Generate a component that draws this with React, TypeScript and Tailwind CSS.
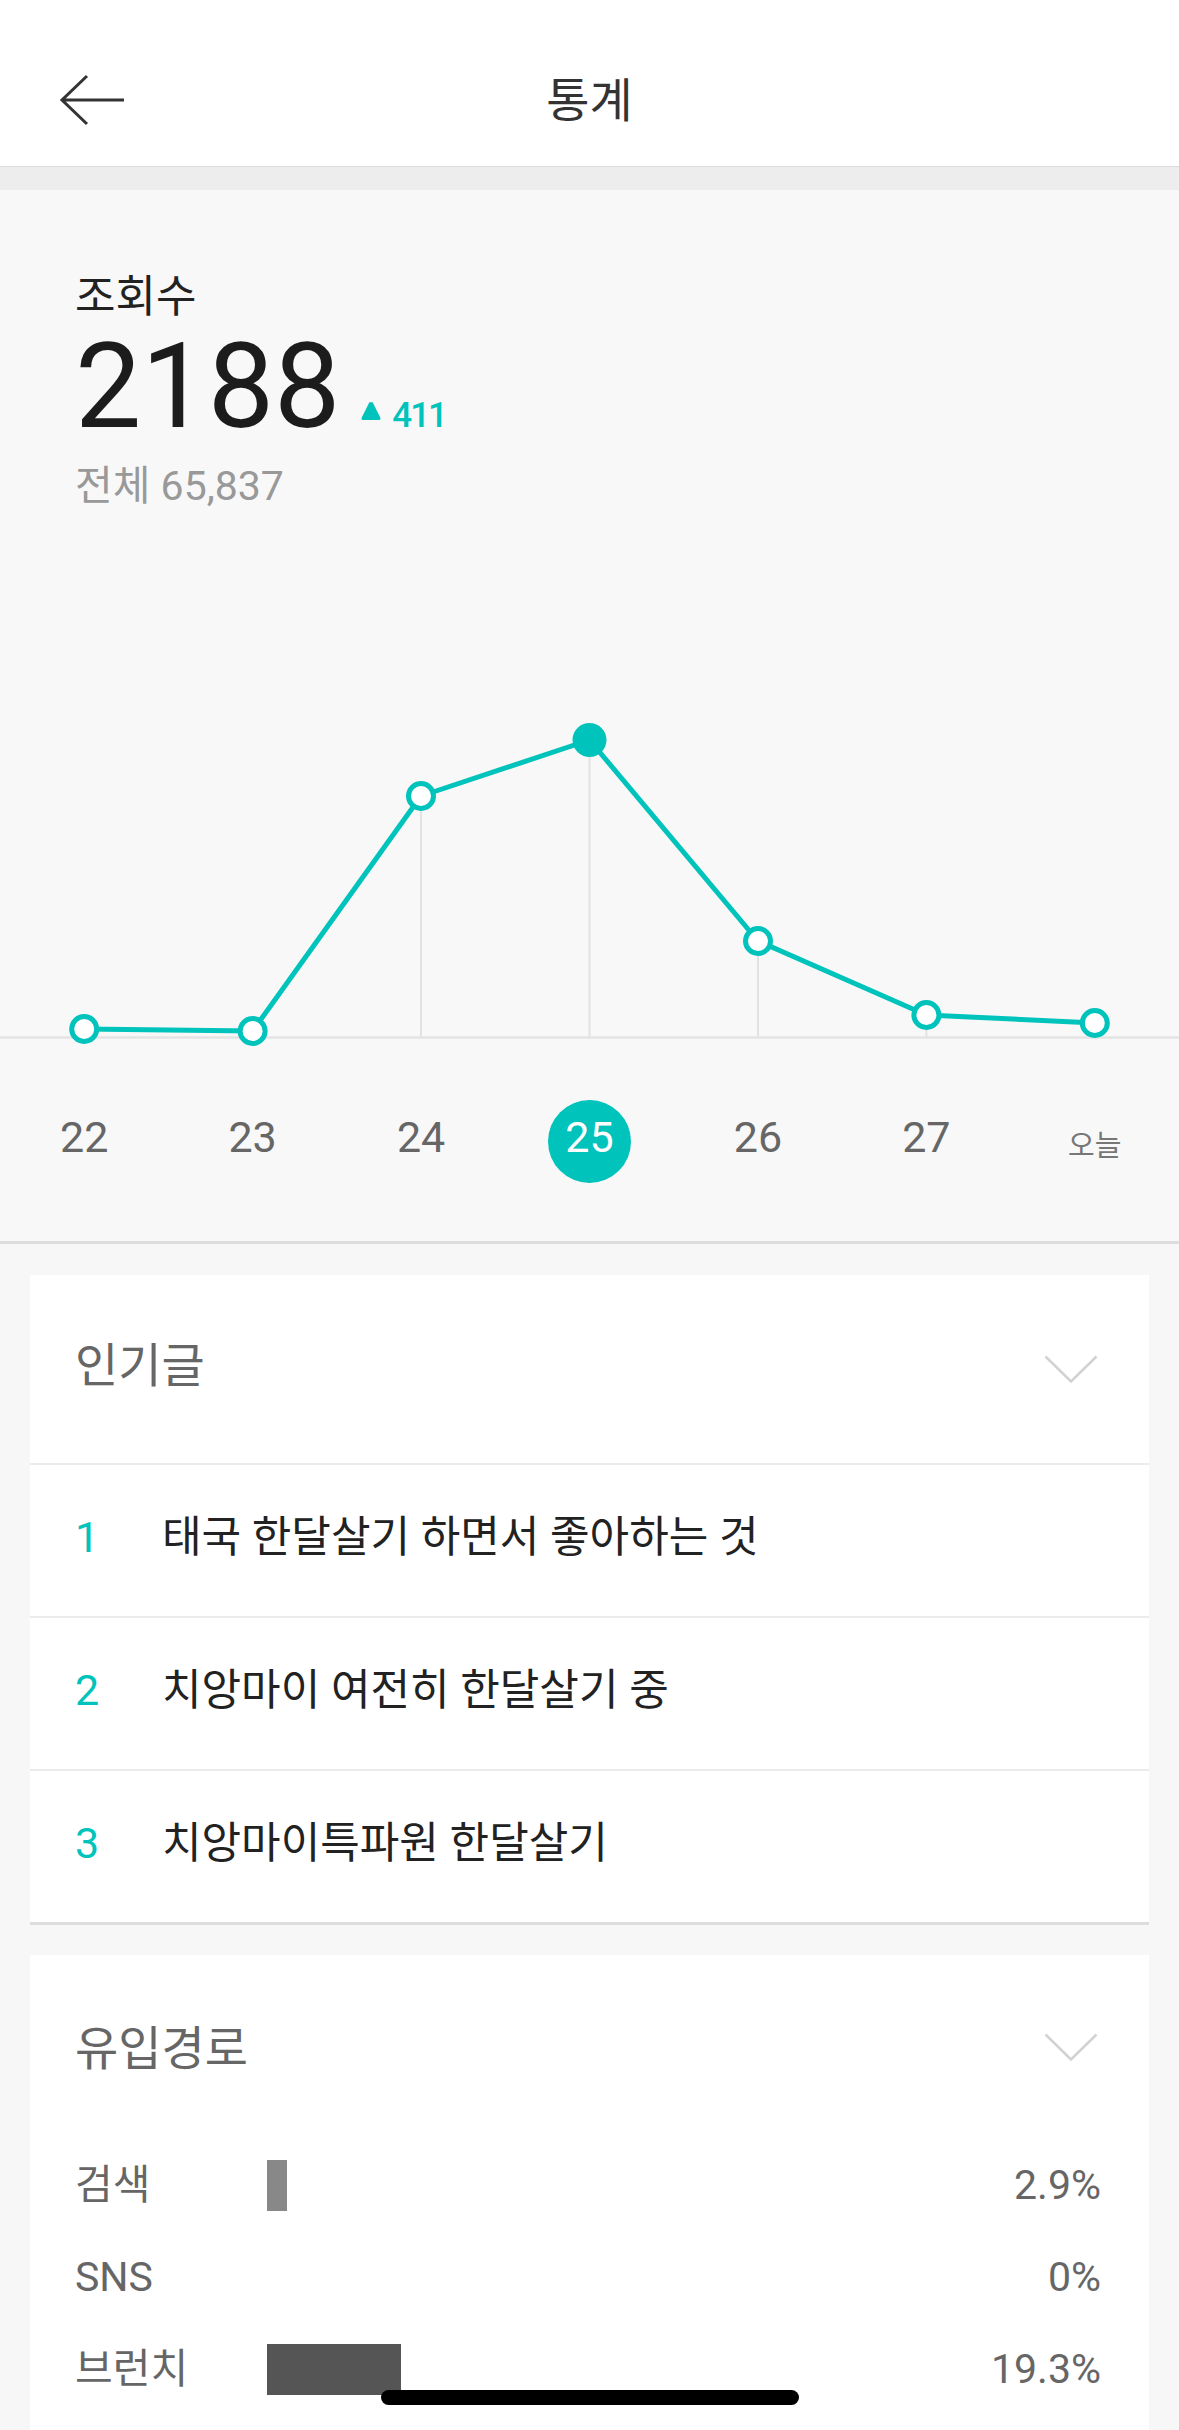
import React from 'react';

// Statistics screen: header, view-count chart, popular posts and traffic sources

const days = ['22', '23', '24', '25', '26', '27'];

const chartPoints = [
    { x: 84.2, y: 488 },
    { x: 252.6, y: 490 },
    { x: 421, y: 255 },
    { x: 589.5, y: 199 },
    { x: 758, y: 400 },
    { x: 926.4, y: 474 },
    { x: 1094.8, y: 482 },
];

const popularPosts = [
    '태국 한달살기 하면서 좋아하는 것',
    '치앙마이 여전히 한달살기 중',
    '치앙마이특파원 한달살기',
];

const sources = [
    { label: '검색', pct: 2.9, color: '#888888' },
    { label: 'SNS', pct: 0, color: '#888888' },
    { label: '브런치', pct: 19.3, color: '#555555' },
];

function Chevron() {
    return (
        <svg width="54" height="28" viewBox="0 0 54 28" fill="none">
            <polyline points="1.5,1.5 27,26.5 52.5,1.5" stroke="#d2d2d2" strokeWidth="2.5" />
        </svg>
    );
}

function Chart() {
    const baseline = 496.5;
    return (
        <svg width="1179" height="559" viewBox="0 0 1179 559" className="block">
            <line x1="0" y1={baseline} x2="1179" y2={baseline} stroke="#e4e4e4" strokeWidth="2.5" />
            {chartPoints.map((p, i) => (
                <line key={`g${i}`} x1={p.x} y1={p.y} x2={p.x} y2={baseline} stroke="#e2e2e2" strokeWidth="2" />
            ))}
            <polyline
                points={chartPoints.map((p) => `${p.x},${p.y}`).join(' ')}
                fill="none"
                stroke="#00c3bb"
                strokeWidth="5"
                strokeLinejoin="round"
            />
            {chartPoints.map((p, i) =>
                i === 3 ? (
                    <circle key={`c${i}`} cx={p.x} cy={p.y} r="17" fill="#00c3bb" />
                ) : (
                    <circle key={`c${i}`} cx={p.x} cy={p.y} r="12.5" fill="#ffffff" stroke="#00c3bb" strokeWidth="5" />
                )
            )}
        </svg>
    );
}

export default function App() {
    return (
        <div className="min-h-[2430px] w-[1179px] bg-[#f7f7f7] font-['Roboto','Noto_Sans_CJK_KR',sans-serif]">
            {/* Header */}
            <div className="grid h-[167px] grid-cols-[1fr_auto_1fr] items-center border-b border-[#dcdcdc] bg-white pt-[34px]">
                <div className="pl-[58px]">
                    <svg width="80" height="60" viewBox="0 0 80 60" fill="none" className="block">
                        <path d="M4 30 H66 M29 6 L4 30 L29 54" stroke="#333333" strokeWidth="3" />
                    </svg>
                </div>
                <h1 className="text-[47px] leading-none text-[#333333]">통계</h1>
                <div />
            </div>
            <div className="h-[23px] bg-[#ededed]" />

            {/* Views */}
            <section className="border-b-[3px] border-[#dddddd] bg-[#f8f8f8] pt-[85px] pb-[58px]">
                <div className="pl-[75px]">
                    <p className="text-[44px] leading-none text-[#222222]">조회수</p>
                    <div className="mt-[9px] flex items-baseline">
                        <span className="text-[118px] leading-none text-[#1c1c1c]">2188</span>
                        <span className="ml-[20px] flex items-baseline text-[35px] leading-none font-medium tracking-[-2px] text-[#00c3bb]">
                            <svg width="22" height="20" viewBox="0 0 22 20" className="mr-[10px] translate-y-[-6px]">
                                <path d="M11 1.5 Q12 0.5 13 2 L20.5 17 Q21 19 19 19 H3 Q1 19 1.5 17 L9 2 Q10 0.5 11 1.5 Z" fill="#00c3bb" />
                            </svg>
                            411
                        </span>
                    </div>
                    <p className="mt-[20px] text-[41px] leading-none text-[#999999]">전체 65,837</p>
                </div>

                <div className="mt-[34px]">
                    <Chart />
                </div>

                <div className="grid h-[83px] grid-cols-7">
                    {days.map((d) => (
                        <div key={d} className="flex items-center justify-center">
                            {d === '25' ? (
                                <span className="flex h-[83px] w-[83px] items-center justify-center rounded-full bg-[#00c3bb] text-[43px] leading-none text-white">
                                    <span className="mb-[8px]">{d}</span>
                                </span>
                            ) : (
                                <span className="mb-[8px] text-[43px] leading-none text-[#666666]">{d}</span>
                            )}
                        </div>
                    ))}
                    <div className="flex items-center justify-center">
                        <span className="mt-[10px] text-[29px] leading-none text-[#777777]">오늘</span>
                    </div>
                </div>
            </section>

            {/* Popular posts */}
            <div className="mx-[30px] mt-[31px] border-b-[3px] border-[#dddddd] bg-white">
                <div className="flex h-[188px] items-center justify-between pr-[51px] pl-[45px]">
                    <h2 className="mb-[8px] text-[47px] leading-none text-[#666666]">인기글</h2>
                    <Chevron />
                </div>
                {popularPosts.map((title, i) => (
                    <div key={title} className="flex h-[153px] items-center border-t-2 border-[#ebebeb] pl-[45px]">
                        <span className="mb-[6px] w-[87px] text-[43px] leading-none text-[#00c3bb]">{i + 1}</span>
                        <span className="mb-[6px] text-[43px] leading-none text-[#222222]">{title}</span>
                    </div>
                ))}
            </div>

            {/* Traffic sources */}
            <div className="mx-[30px] mt-[30px] bg-white pb-[60px]">
                <div className="flex h-[184px] items-center justify-between pr-[51px] pl-[45px]">
                    <h2 className="mt-[2px] text-[47px] leading-none text-[#666666]">유입경로</h2>
                    <Chevron />
                </div>
                {sources.map((s) => (
                    <div key={s.label} className="flex h-[92px] items-center pr-[48px] pl-[45px]">
                        <span className="w-[192px] text-[41px] leading-none text-[#666666]">{s.label}</span>
                        <div className="flex-1">
                            {s.pct > 0 && (
                                <div className="h-[51px]" style={{ width: `${s.pct * 6.94}px`, backgroundColor: s.color }} />
                            )}
                        </div>
                        <span className="text-[41px] leading-none text-[#666666]">{s.pct}%</span>
                    </div>
                ))}
            </div>

            {/* Home indicator */}
            <div className="fixed bottom-[25px] left-[381px] h-[15px] w-[418px] rounded-full bg-black" />
        </div>
    );
}
